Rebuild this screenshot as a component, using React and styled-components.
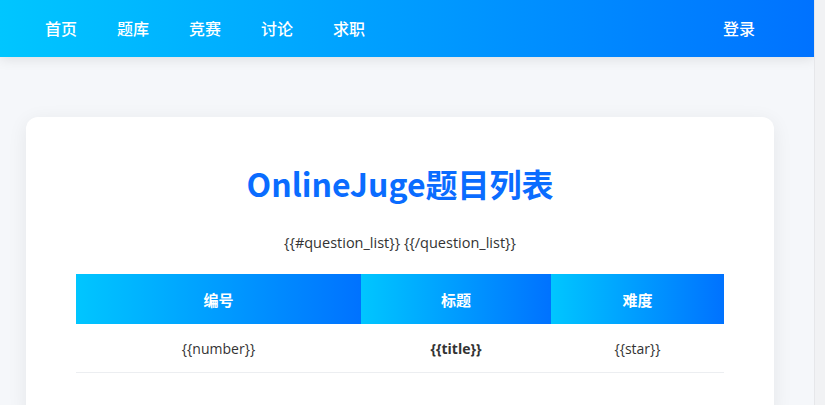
import React from 'react';
import styled, { createGlobalStyle } from 'styled-components';

const GlobalStyle = createGlobalStyle`
  html, body {
    margin: 0;
    padding: 0;
  }
  html {
    background: #f1f2f4;
  }
  body {
    font-family: "Open Sans", "Noto Sans CJK SC", sans-serif;
    color: #333;
  }
  #root {
    margin-right: 10px;
    background: #f5f7fa;
    border-right: 1px solid #e6e7ea;
    overflow: hidden;
  }
`;

const navLinks = ['首页', '题库', '竞赛', '讨论', '求职'];

const questions = [{ number: '{{number}}', title: '{{title}}', star: '{{star}}' }];

const NavBar = styled.nav`
  height: 57px;
  display: flex;
  align-items: center;
  justify-content: space-between;
  padding: 0 39px 0 25px;
  background: linear-gradient(90deg, #00c6ff, #0072ff);
  box-shadow: 0 2px 12px rgba(0, 0, 0, 0.1);
`;

const NavGroup = styled.div`
  display: flex;
  align-items: center;
`;

const NavLink = styled.a`
  padding: 0 20px;
  color: #fff;
  font-family: "Noto Sans CJK SC", sans-serif;
  font-size: 16px;
  font-weight: 500;
  text-decoration: none;
  line-height: 57px;
`;

const Card = styled.main`
  margin: 60px 40px 60px 26px;
  padding: 44px 50px 45px;
  background: #fff;
  border-radius: 12px;
  box-shadow: 0 4px 20px rgba(0, 0, 0, 0.07);
`;

const Title = styled.h1`
  margin: 0;
  text-align: center;
  color: #0a6cff;
  font-family: "Noto Sans CJK SC", sans-serif;
  font-size: 32px;
  font-weight: 700;
  line-height: 44px;
`;

const Template = styled.p`
  margin: 28px 0 21px;
  text-align: center;
  font-size: 14.5px;
  line-height: 20px;
  color: #333;
`;

const Table = styled.table`
  width: 100%;
  border-collapse: collapse;
  table-layout: fixed;
`;

const Th = styled.th`
  width: ${(p) => p.$w}px;
  height: 50px;
  padding: 0;
  background: linear-gradient(90deg, #00c6ff, #0072ff);
  color: #fff;
  font-family: "Noto Sans CJK SC", sans-serif;
  font-size: 15px;
  font-weight: 700;
  text-align: center;
`;

const Td = styled.td`
  height: 48px;
  padding: 0;
  text-align: center;
  font-size: 14px;
  font-weight: ${(p) => (p.$bold ? 700 : 400)};
  color: #333;
  border-bottom: 1px solid #eceef1;
`;

export default function App() {
  return (
    <>
      <GlobalStyle />
      <NavBar>
        <NavGroup>
          {navLinks.map((l) => (
            <NavLink key={l} href="#">{l}</NavLink>
          ))}
        </NavGroup>
        <NavLink href="#">登录</NavLink>
      </NavBar>
      <Card>
        <Title>OnlineJuge题目列表</Title>
        <Template>{'{{#question_list}} {{/question_list}}'}</Template>
        <Table>
          <thead>
            <tr>
              <Th $w={285}>编号</Th>
              <Th $w={190}>标题</Th>
              <Th $w={173}>难度</Th>
            </tr>
          </thead>
          <tbody>
            {questions.map((q, i) => (
              <tr key={i}>
                <Td>{q.number}</Td>
                <Td $bold>{q.title}</Td>
                <Td>{q.star}</Td>
              </tr>
            ))}
          </tbody>
        </Table>
      </Card>
    </>
  );
}
